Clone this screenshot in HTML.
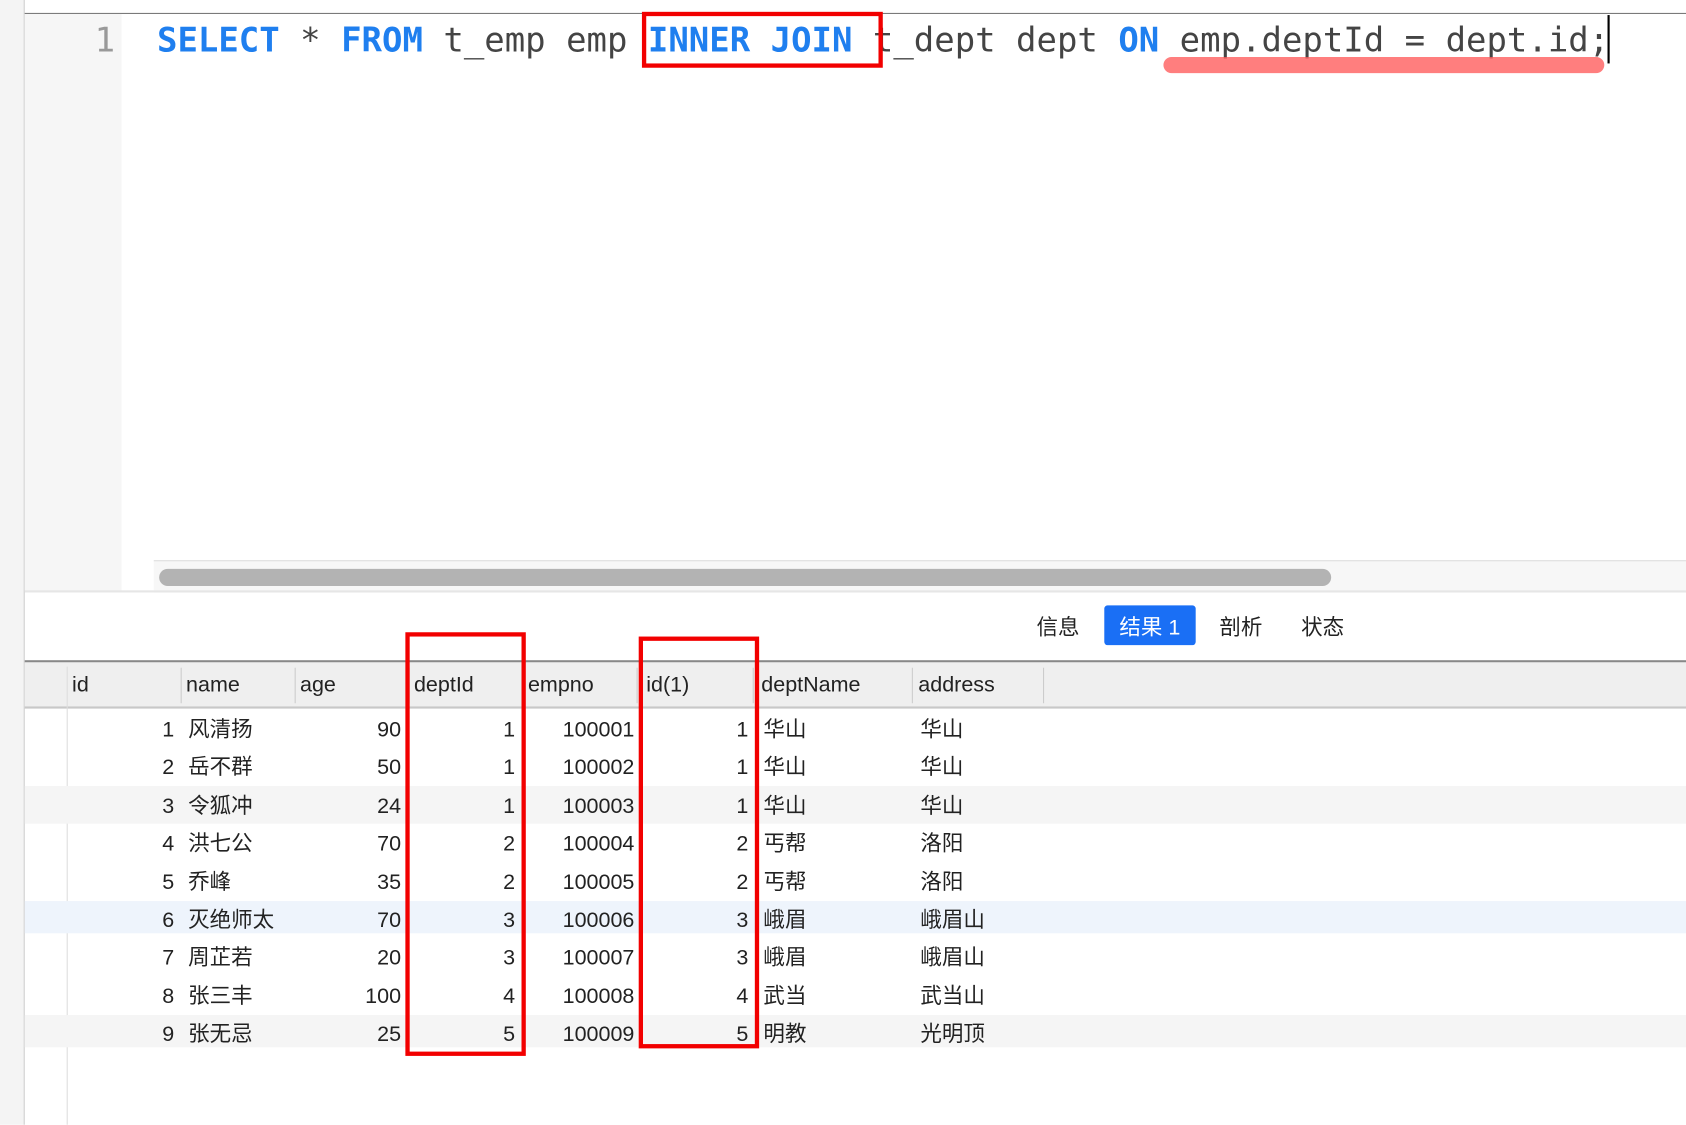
<!DOCTYPE html>
<html><head><meta charset="utf-8"><style>
html,body{margin:0;padding:0;background:#fff;overflow:hidden}
#w{position:absolute;left:0;top:0;width:1568px;height:1046px;transform:scale(1.07526);transform-origin:0 0;font-family:"Liberation Sans","Noto Sans CJK SC",sans-serif;color:#222}
.a{position:absolute}
.code{font-family:"DejaVu Sans Mono","Liberation Mono",monospace;font-size:31.6px;white-space:pre;color:#444}
.k{color:#1f7fef;font-weight:bold}
.t{font-size:20px;line-height:24px;position:absolute;white-space:nowrap}
.red{position:absolute;border:4px solid #f20000;box-sizing:border-box}
</style></head><body><div id="w">
<div class="a" style="left:0;top:0;width:22px;height:1046px;background:#f4f4f4"></div>
<div class="a" style="left:22px;top:0;width:1px;height:1046px;background:#ccc"></div>
<div class="a" style="left:23px;top:12px;width:1545px;height:1px;background:#777"></div>
<div class="a" style="left:23px;top:13px;width:90px;height:537px;background:#f6f6f6"></div>
<div class="a code" style="left:88px;top:20px;color:#999">1</div>
<div class="a code" style="left:146px;top:20px"><span class="k">SELECT</span> * <span class="k">FROM</span> t_emp emp <span class="k">INNER JOIN</span> t_dept dept <span class="k">ON</span> emp.deptId = dept.id;</div>
<div class="a" style="left:1082px;top:53px;width:410px;height:15px;border-radius:8px;background:rgba(255,90,90,0.78)"></div>
<div class="a" style="left:1495px;top:14px;width:2px;height:45px;background:#000"></div>
<div class="red" style="left:597px;top:11px;width:224px;height:52px"></div>
<div class="a" style="left:143px;top:521px;width:1425px;height:29px;background:#f7f7f7;border-top:1px solid #ddd"></div>
<div class="a" style="left:148px;top:529px;width:1090px;height:16px;border-radius:8px;background:#b3b3b3"></div>
<div class="a" style="left:23px;top:549px;width:1545px;height:2px;background:#e6e6e6"></div>
<div class="t" style="left:964px;top:572px">信息</div>
<div class="a" style="left:1027px;top:563px;width:85px;height:37px;background:#1a6ff5;border-radius:3px"></div>
<div class="t" style="left:1041px;top:572px;color:#fff">结果 1</div>
<div class="t" style="left:1134px;top:572px">剖析</div>
<div class="t" style="left:1210px;top:572px">状态</div>
<div class="a" style="left:23px;top:614px;width:1545px;height:2px;background:#888"></div>
<div class="a" style="left:23px;top:616px;width:1545px;height:42px;background:#efefef"></div>
<div class="a" style="left:23px;top:657px;width:1545px;height:2px;background:#c8c8c8"></div>
<div class="a" style="left:62px;top:620px;width:1px;height:426px;background:#ddd"></div>
<div class="a" style="left:23px;top:731px;width:1545px;height:35px;background:#f5f5f5"></div>
<div class="a" style="left:23px;top:838px;width:1545px;height:30px;background:#eef4fc"></div>
<div class="a" style="left:23px;top:944px;width:1545px;height:30px;background:#f5f5f5"></div>
<div class="red" style="left:377px;top:588px;width:112px;height:394px;z-index:2"></div>
<div class="red" style="left:594px;top:592px;width:112px;height:383px;z-index:2"></div>
</div>
<script>
var w=document.getElementById('w');
[168,274,380,486,592,700,848,970].forEach(function(x){var d=document.createElement('div');d.className='a';d.style.cssText='left:'+x+'px;top:621px;width:1px;height:33px;background:#ccc';w.appendChild(d);});
var H=[['id',67],['name',173],['age',279],['deptId',385],['empno',491],['id(1)',601],['deptName',708],['address',854]];
H.forEach(function(h){var d=document.createElement('div');d.className='t';d.style.left=h[1]+'px';d.style.top='625px';d.textContent=h[0];w.appendChild(d);});
var R=[[1,'风清扬',90,1,100001,1,'华山','华山'],[2,'岳不群',50,1,100002,1,'华山','华山'],[3,'令狐冲',24,1,100003,1,'华山','华山'],[4,'洪七公',70,2,100004,2,'丐帮','洛阳'],[5,'乔峰',35,2,100005,2,'丐帮','洛阳'],[6,'灭绝师太',70,3,100006,3,'峨眉','峨眉山'],[7,'周芷若',20,3,100007,3,'峨眉','峨眉山'],[8,'张三丰',100,4,100008,4,'武当','武当山'],[9,'张无忌',25,5,100009,5,'明教','光明顶']];
function add(txt,x,y,right){var d=document.createElement('div');d.className='t';d.textContent=txt;d.style.top=y+'px';if(right){d.style.left=(x-200)+'px';d.style.width='200px';d.style.textAlign='right';}else d.style.left=x+'px';w.appendChild(d);}
R.forEach(function(r,i){var y=667+i*35.4;add(r[0],162,y,1);add(r[1],175,y);add(r[2],373,y,1);add(r[3],479,y,1);add(r[4],590,y,1);add(r[5],696,y,1);add(r[6],710,y);add(r[7],856,y);});
</script>
</body></html>
